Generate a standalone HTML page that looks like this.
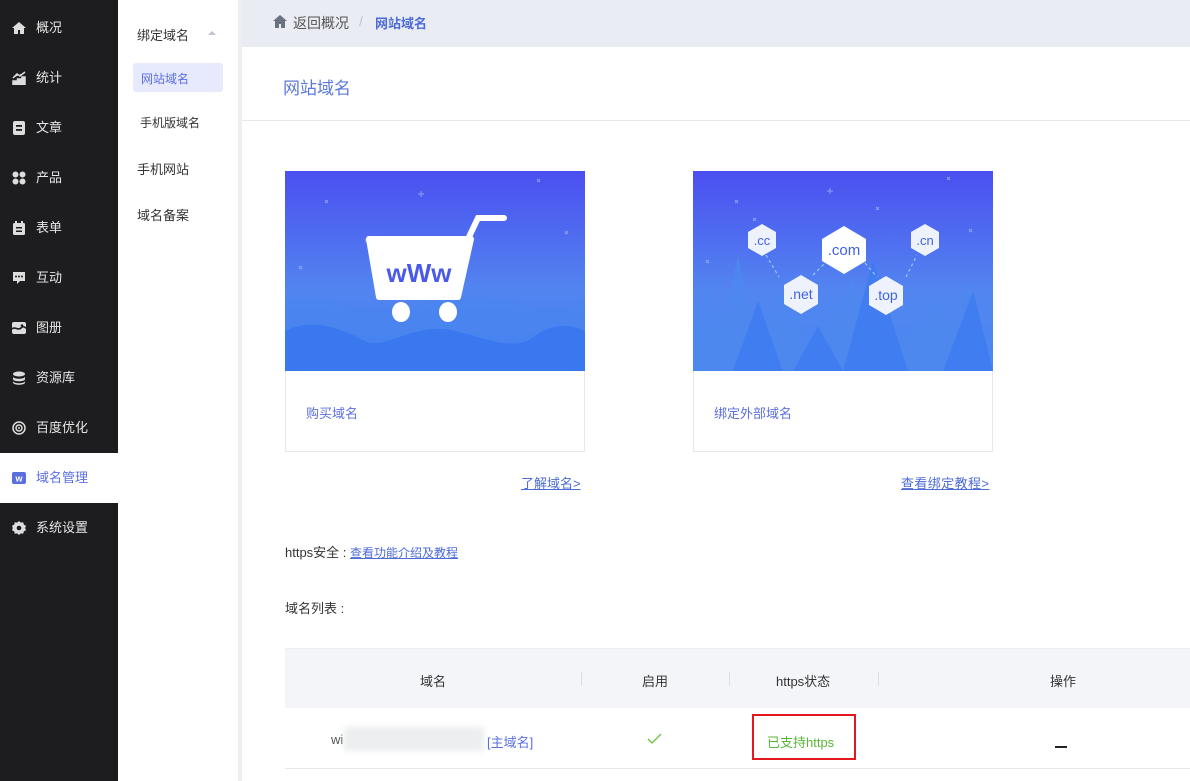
<!DOCTYPE html>
<html><head><meta charset="utf-8"><style>
*{margin:0;padding:0;box-sizing:border-box}
body{width:1190px;height:781px;overflow:hidden;font-family:"Liberation Sans","Noto Sans CJK SC",sans-serif;font-size:13px;color:#333;background:#fff;position:relative}
.sb{position:absolute;left:0;top:0;width:118px;height:781px;background:#1d1d1f}
.sb .it{position:absolute;left:0;width:118px;height:50px;color:#e6e6e6;font-size:13px;line-height:50px;padding-left:36px}
.sb .ic{position:absolute;left:12px;top:18px;width:14px;height:14px}
.sb .act{background:#fff;color:#5b6fe0}
.sec{position:absolute;left:118px;top:0;width:120px;height:781px;background:#fff}
.sec div{position:absolute;font-size:13px;color:#333}
.gap{position:absolute;left:238px;top:0;width:4px;height:781px;background:#eceef2}
.top{position:absolute;left:242px;top:0;width:948px;height:47px;background:#e9ecf2}
.abs{position:absolute}
a{color:#4d6bd8;text-decoration:underline}
</style></head><body>
<div class="sb">
 <div class="it" style="top:3px"><svg class="ic" viewBox="0 0 14 14"><path d="M7 1L0 7h2v6h4V9h2v4h4V7h2z" fill="#ddd"/></svg>概况</div>
 <div class="it" style="top:53px"><svg class="ic" viewBox="0 0 14 14"><path d="M1 14V10h3v4zM5.5 14V8h3v6zM10 14V6h3v8zM1 7l4-4 3 2 5-4" fill="#ddd" stroke="#ddd" stroke-width="1.5"/></svg>统计</div>
 <div class="it" style="top:103px"><svg class="ic" viewBox="0 0 14 14"><rect x="1" y="0" width="12" height="14" rx="2" fill="#ddd"/><rect x="4" y="4" width="6" height="1.8" fill="#1d1d1f"/><rect x="4" y="8" width="6" height="1.8" fill="#1d1d1f"/></svg>文章</div>
 <div class="it" style="top:153px"><svg class="ic" viewBox="0 0 14 14"><circle cx="3.5" cy="3.5" r="3" fill="#ddd"/><circle cx="10.5" cy="3.5" r="3" fill="#ddd"/><circle cx="3.5" cy="10.5" r="3" fill="#ddd"/><circle cx="10.5" cy="10.5" r="3" fill="#ddd"/></svg>产品</div>
 <div class="it" style="top:203px"><svg class="ic" viewBox="0 0 14 14"><rect x="1" y="2" width="12" height="12" rx="1.5" fill="#ddd"/><rect x="3" y="0" width="2" height="3" fill="#ddd"/><rect x="9" y="0" width="2" height="3" fill="#ddd"/><rect x="4" y="6" width="6" height="1.5" fill="#1d1d1f"/><rect x="4" y="9.5" width="6" height="1.5" fill="#1d1d1f"/></svg>表单</div>
 <div class="it" style="top:253px"><svg class="ic" viewBox="0 0 14 14"><path d="M1 1h12v9H8l-3 3v-3H1z" fill="#ddd"/><circle cx="4" cy="5.5" r="1" fill="#1d1d1f"/><circle cx="7" cy="5.5" r="1" fill="#1d1d1f"/><circle cx="10" cy="5.5" r="1" fill="#1d1d1f"/></svg>互动</div>
 <div class="it" style="top:303px"><svg class="ic" viewBox="0 0 14 14"><rect x="0" y="1" width="14" height="12" rx="2" fill="#ddd"/><path d="M0 8c3-3 6 2 9-1s4 0 5 0" stroke="#1d1d1f" stroke-width="1.6" fill="none"/><circle cx="10" cy="4.5" r="1.3" fill="#1d1d1f"/></svg>图册</div>
 <div class="it" style="top:353px"><svg class="ic" viewBox="0 0 14 14"><ellipse cx="7" cy="3" rx="6" ry="2.5" fill="#ddd"/><path d="M1 5.5c0 3 12 3 12 0v2.5c0 3-12 3-12 0zM1 10c0 3 12 3 12 0v1.5c0 3-12 3-12 0z" fill="#ddd"/></svg>资源库</div>
 <div class="it" style="top:403px"><svg class="ic" viewBox="0 0 14 14"><circle cx="7" cy="7" r="6" stroke="#ddd" stroke-width="1.5" fill="none"/><circle cx="7" cy="7" r="3" stroke="#ddd" stroke-width="1.5" fill="none"/><circle cx="7" cy="7" r="1" fill="#ddd"/></svg>百度优化</div>
 <div style="position:absolute;left:0;top:453px;width:118px;height:50px;background:#fff"></div>
 <div class="it act" style="top:453px"><svg class="ic" viewBox="0 0 14 14"><rect x="0" y="1" width="14" height="12" rx="2" fill="#5b6fe0"/><text x="7" y="10.5" font-size="9" font-weight="bold" fill="#fff" text-anchor="middle" font-family="Liberation Sans">w</text></svg>域名管理</div>
 <div style="position:absolute;left:0;top:443px;width:118px;height:10px;background:#1d1d1f;border-radius:0 0 6px 0"></div>
 <div style="position:absolute;left:0;top:503px;width:118px;height:10px;background:#1d1d1f;border-radius:0 6px 0 0"></div>
 <div class="it" style="top:503px"><svg class="ic" viewBox="0 0 14 14"><path d="M7 0l1.8 1.6 2.4-.3.6 2.3 2.2 1.1-.8 2.3.8 2.3-2.2 1.1-.6 2.3-2.4-.3L7 14l-1.8-1.6-2.4.3-.6-2.3L0 9.3l.8-2.3L0 4.7l2.2-1.1.6-2.3 2.4.3z" fill="#ddd"/><circle cx="7" cy="7" r="2.3" fill="#1d1d1f"/></svg>系统设置</div>
</div>
<div class="sec">
 <div style="left:19px;top:25px">绑定域名</div>
 <div style="left:90px;top:31px;width:0;height:0;border-left:4px solid transparent;border-right:4px solid transparent;border-bottom:4px solid #c0c4cc"></div>
 <div style="left:15px;top:63px;width:90px;height:29px;background:#e6eafc;border-radius:3px"></div>
 <div style="left:23px;top:70px;color:#5b6fe0;font-size:12px">网站域名</div>
 <div style="left:22px;top:114px;font-size:12px">手机版域名</div>
 <div style="left:19px;top:159px">手机网站</div>
 <div style="left:19px;top:205px">域名备案</div>
</div>
<div class="gap"></div>
<div class="top">
 <svg class="abs" style="left:31px;top:15px" width="14" height="13" viewBox="0 0 14 13"><path d="M7 0L0 6h2v7h4V9h2v4h4V6h2z" fill="#6b7280"/></svg>
 <div class="abs" style="left:51px;top:13px;font-size:14px;color:#555">返回概况</div>
 <div class="abs" style="left:117px;top:13px;font-size:14px;color:#c0c4cc">/</div>
 <div class="abs" style="left:133px;top:13px;font-size:13px;color:#4d6bd8;font-weight:bold">网站域名</div>
</div>
<div class="abs" style="left:283px;top:74px;font-size:17px;color:#5b7ad8">网站域名</div>
<div class="abs" style="left:242px;top:120px;width:948px;height:1px;background:#e6e8ec"></div>

<!-- card 1 -->
<div class="abs" style="left:285px;top:171px;width:300px;height:281px;border:1px solid #e8e8e8;border-top:none"></div>
<svg class="abs" style="left:285px;top:171px" width="300" height="200" viewBox="0 0 300 200">
 <defs><linearGradient id="g1" x1="0" y1="0" x2="0" y2="1"><stop offset="0" stop-color="#4b4ff0"/><stop offset="0.6" stop-color="#5285f0"/><stop offset="1" stop-color="#3b7af0"/></linearGradient></defs>
 <rect width="300" height="200" fill="url(#g1)"/>
 <g stroke="#9fb0f5" stroke-width="1" opacity=".8"><path d="M40 29l3 3M43 29l-3 3M80 68l3 3M83 68l-3 3M252 8l3 3M255 8l-3 3M280 60l3 3M283 60l-3 3M14 95l3 3M17 95l-3 3M136 20v6M133 23h6"/></g>
 <path d="M0 130c40-10 70 20 110 10s80-20 130-5 60-10 60-10v75H0z" fill="#4a86ee" opacity=".7"/>
 <path d="M0 160c30-15 60 0 80 10s50-20 90-10 60 20 80 5 40-10 50-5v40H0z" fill="#3a78ef"/>
 <path d="M84 68h102l-13 58H94z" fill="#fff" stroke="#fff" stroke-width="6" stroke-linejoin="round"/>
 <path d="M183 68l10-21h26" stroke="#fff" stroke-width="6" stroke-linecap="round" fill="none"/>
 <ellipse cx="116" cy="141" rx="9" ry="10" fill="#fff"/><ellipse cx="163" cy="141" rx="9" ry="10" fill="#fff"/>
 <text x="134" y="111" font-family="Liberation Sans" font-size="26" font-weight="bold" fill="#4a5ae8" text-anchor="middle">wWw</text>
</svg>
<div class="abs" style="left:306px;top:403px;color:#5b6fe0">购买域名</div>
<a class="abs" style="left:521px;top:473px">了解域名&gt;</a>

<!-- card 2 -->
<div class="abs" style="left:693px;top:171px;width:300px;height:281px;border:1px solid #e8e8e8;border-top:none"></div>
<svg class="abs" style="left:693px;top:171px" width="300" height="200" viewBox="0 0 300 200">
 <defs><linearGradient id="g2" x1="0" y1="0" x2="0" y2="1"><stop offset="0" stop-color="#4b4ff0"/><stop offset="0.6" stop-color="#5285f0"/><stop offset="1" stop-color="#4a88f0"/></linearGradient></defs>
 <rect width="300" height="200" fill="url(#g2)"/>
 <g stroke="#9fb0f5" stroke-width="1" opacity=".8"><path d="M42 29l3 3M45 29l-3 3M60 47l3 3M63 47l-3 3M254 6l3 3M257 6l-3 3M276 58l3 3M279 58l-3 3M13 89l3 3M16 89l-3 3M183 36l3 3M186 36l-3 3M137 17v6M134 20h6"/></g>
 <path d="M0 200L15 110 30 200zM20 200L45 85 70 200zM60 200L90 120 120 200zM110 200L160 110 200 200zM180 200L245 130 280 200zM240 200L275 110 300 200z" fill="#4d88ef" opacity=".8"/>
 <path d="M40 200L65 130 90 200zM100 200L125 155 150 200zM150 200L180 90 215 200zM250 200L280 120 300 200z" fill="#3d7af0" opacity=".8"/>
 <g stroke="#cfe" stroke-width="1" stroke-dasharray="3 3" fill="none" opacity=".7"><path d="M73 84L86 106M120 104L132 92M172 92L184 106M213 106L224 84"/></g>
 <g fill="#eef2fd"><path d="M69 53l14 8v16l-14 8-14-8V61z"/><path d="M232 53l14 8v16l-14 8-14-8V61z"/><path d="M108 104l17 10v19l-17 10-17-10v-19z"/><path d="M193 105l17 10v19l-17 10-17-10v-19z"/></g>
 <path d="M151 55l22 13v22l-22 13-22-13V68z" fill="#fff"/>
 <g font-family="Liberation Sans" fill="#3f63e6" text-anchor="middle"><text x="69" y="74" font-size="13">.cc</text><text x="232" y="74" font-size="13">.cn</text><text x="151" y="84" font-size="15">.com</text><text x="108" y="128" font-size="14">.net</text><text x="193" y="129" font-size="14">.top</text></g>
</svg>
<div class="abs" style="left:714px;top:403px;color:#5b6fe0">绑定外部域名</div>
<a class="abs" style="left:901px;top:473px;letter-spacing:.4px">查看绑定教程&gt;</a>

<div class="abs" style="left:285px;top:542px">https安全 : <a style="font-size:12px">查看功能介绍及教程</a></div>
<div class="abs" style="left:285px;top:598px">域名列表 :</div>

<div class="abs" style="left:285px;top:648px;width:905px;height:60px;background:#f4f5f9;border-top:1px solid #eceef2"></div>
<div class="abs" style="left:420px;top:671px">域名</div>
<div class="abs" style="left:581px;top:672px;width:1px;height:14px;background:#dcdfe6"></div>
<div class="abs" style="left:642px;top:671px">启用</div>
<div class="abs" style="left:729px;top:672px;width:1px;height:14px;background:#dcdfe6"></div>
<div class="abs" style="left:776px;top:671px">https状态</div>
<div class="abs" style="left:878px;top:672px;width:1px;height:14px;background:#dcdfe6"></div>
<div class="abs" style="left:1050px;top:671px">操作</div>
<div class="abs" style="left:285px;top:768px;width:905px;height:1px;background:#e6e8ec"></div>
<div class="abs" style="left:331px;top:732px;color:#555">wi</div>
<div class="abs" style="left:344px;top:727px;width:140px;height:24px;background:#eceef0;filter:blur(3px)"></div>
<div class="abs" style="left:487px;top:732px;color:#5b6fe0">[主域名]</div>
<svg class="abs" style="left:647px;top:733px" width="15" height="11" viewBox="0 0 15 11"><path d="M1 6l4 4 9-9" stroke="#67c23a" stroke-width="1.3" fill="none"/></svg>
<div class="abs" style="left:752px;top:714px;width:104px;height:46px;border:2px solid #e4171f"></div>
<div class="abs" style="left:767px;top:732px;color:#5bb53a">已支持https</div>
<div class="abs" style="left:1055px;top:746px;width:12px;height:1.5px;background:#222"></div>
</body></html>
